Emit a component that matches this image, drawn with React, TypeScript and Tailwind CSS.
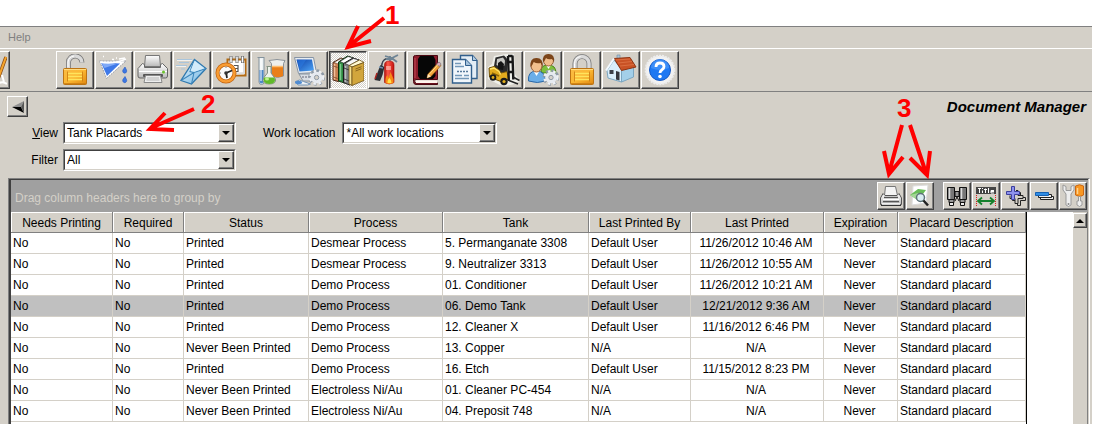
import type { ReactNode } from "react";

type IconProps = { children: ReactNode };

const Icon = ({ children }: IconProps) => (
    <svg viewBox="0 0 32 32" className="h-8 w-8 shrink-0" fill="none" aria-hidden="true">
        {children}
    </svg>
);

const Gear = ({ x, y }: { x: number; y: number }) => (
    <g>
        <circle cx={x} cy={y} r="6.6" stroke="#8d99a6" strokeWidth="3.4" strokeDasharray="2.6 2.6" />
        <circle cx={x} cy={y} r="6.3" stroke="#eef1f5" strokeWidth="2.6" strokeDasharray="2.4 2.8" />
        <circle cx={x} cy={y} r="4.3" fill="#f4f6f9" stroke="#e6eaf0" strokeWidth="3" />
        <circle cx={x} cy={y} r="2.2" fill="#d4d0c8" stroke="#8d99a6" />
    </g>
);

const LockBody = () => (
    <g>
        <rect x="4.5" y="14.5" width="23" height="16" rx="1" fill="url(#gold)" stroke="#bd7413" />
        <path d="M5 15.5h22" stroke="#ffdc82" />
        <path d="M9 19.5h14M9 22.5h14M9 25.5h14" stroke="#ffe45c" strokeWidth="1.4" />
        <path d="M8.5 17.5v10M23.5 17.5v10M5 29.5h22" stroke="#c97b12" strokeWidth=".8" />
    </g>
);

const Defs = () => (
    <svg className="absolute h-0 w-0" aria-hidden="true">
        <defs>
            <linearGradient id="gold" x1="0" y1="0" x2="1" y2="1">
                <stop offset="0" stopColor="#f9bc45" />
                <stop offset=".5" stopColor="#fbb733" />
                <stop offset="1" stopColor="#e0870f" />
            </linearGradient>
            <linearGradient id="sky" x1="0" y1="0" x2="1" y2="1">
                <stop offset="0" stopColor="#eaf6fd" />
                <stop offset="1" stopColor="#6db3e2" />
            </linearGradient>
            <linearGradient id="blue" x1="0" y1="0" x2="1" y2="1">
                <stop offset="0" stopColor="#0b3fa8" />
                <stop offset="1" stopColor="#4fa6f7" />
            </linearGradient>
            <linearGradient id="red" x1="0" y1="0" x2="1" y2="0">
                <stop offset="0" stopColor="#b3100c" />
                <stop offset=".35" stopColor="#ff5a4a" />
                <stop offset="1" stopColor="#c1120e" />
            </linearGradient>
            <linearGradient id="grey" x1="0" y1="0" x2="0" y2="1">
                <stop offset="0" stopColor="#ffffff" />
                <stop offset="1" stopColor="#b9b9b9" />
            </linearGradient>
        </defs>
    </svg>
);

const UnlockIcon = () => (
    <Icon>
        <path d="M9.5 14V8a6.7 6.3 0 0 1 13.4 0.5" stroke="#777" strokeWidth="5" />
        <path d="M9.5 14V8a6.7 6.3 0 0 1 13.4 0.5" stroke="#d9d9d9" strokeWidth="3.4" />
        <path d="M9 13V8a7 7 0 0 1 6-6" stroke="#fff" />
        <LockBody />
    </Icon>
);

const LockIcon = () => (
    <Icon>
        <path d="M9 15V9.500a7 7 0 0 1 14 0V15" stroke="#7d7d7d" strokeWidth="5" />
        <path d="M9 15V9.500a7 7 0 0 1 14 0V15" stroke="#d9d9d9" strokeWidth="3.400" />
        <path d="M8.500 15V9.500a7.500 7.500 0 0 1 6-7" stroke="#fff" />
        <LockBody />
    </Icon>
);

const FunnelIcon = () => (
    <Icon>
        <path d="M1.500 7h26.500L8.500 24.500Z" fill="#fff" stroke="#9a9ea8" strokeDasharray="2 1" />
        <path d="M3 8.500l19 1L9 22Z" fill="#3f79e8" />
        <path d="M3.500 9l15 1-12 4Z" fill="#7fa9f7" />
        <path d="M2 8q12 3 26-3" stroke="#fff" strokeWidth="1.500" />
        <path d="M21 5l6-1M5 2.500h1M18 4h1M14 5.500h2" stroke="#fff" strokeWidth="1.400" />
        <path d="M27 13l1.500 3a2 2.200 0 1 1-3.600 0ZM27 22.500l1.500 3a2 2.200 0 1 1-3.600 0Z" fill="#3d78e3" stroke="#2758bd" strokeWidth=".6" />
    </Icon>
);

const PrinterIcon = () => (
    <Icon>
        <path d="M8.500 1.500h14l1 11h-16Z" fill="url(#grey)" stroke="#777" />
        <path d="M5.500 9.500l2 1v3h16v-3l2-1 5 5v7.500q0 2-2 2H3q-2 0-2-2V14.500Z" fill="url(#grey)" stroke="#666" />
        <path d="M2 17.500h28" stroke="#fff" />
        <rect x="6" y="20" width="20" height="3" rx="1" fill="#555" />
        <path d="M8.500 21.500h15l1.500 7H7Z" fill="#eee" stroke="#888" />
        <path d="M10 24h12M9.500 26h13" stroke="#b5b5b5" />
        <circle cx="26.500" cy="18" r="1.500" fill="#6ac22c" />
    </Icon>
);

const MailIcon = () => (
    <Icon>
        <path d="M1 5.500h15M3 8.500h10M0 11.500h11M5 15h4" stroke="#a9c5dc" />
        <path d="M1 6.500h15M0 12.500h10" stroke="#fff" strokeWidth=".7" />
        <path d="M18.500 5.500L30 14.500 15.500 30 5 26.500Z" fill="url(#sky)" stroke="#2f78ae" strokeWidth="1.300" />
        <path d="M5 26.500L18 18.500 30 14.500M18 18.500L15.500 30M18.500 5.500L14 17.500l4 1" stroke="#3c86bb" strokeWidth="1.100" />
        <path d="M18.500 7l-4 10 4 .7 10-3.400Z" fill="#d2ebfa" />
    </Icon>
);

const ScheduleIcon = () => (
    <Icon>
        <rect x="12.500" y="5.500" width="18" height="16" fill="#fff" stroke="#b26a12" strokeWidth="2" />
        <path d="M14 20l15-1V9" stroke="#ddd" strokeWidth="2" />
        <path d="M16 2v7M22 2v7M27.500 2v7" stroke="#666" strokeWidth="3" />
        <path d="M16 2.500v6M22 2.500v6M27.500 2.500v6" stroke="#fff" strokeWidth="1.500" />
        <path d="M19 11.500h4v6h-4M20 14.500h3" stroke="#555" strokeWidth="1.200" />
        <circle cx="11" cy="19" r="8.500" fill="#fafafa" stroke="#c06513" strokeWidth="4" />
        <circle cx="11" cy="19" r="8.500" stroke="#f99c32" strokeWidth="2.500" />
        <path d="M11 19l6-2.500M11 18l1 6" stroke="#222" strokeWidth="1.800" />
        <circle cx="11" cy="19" r="1.800" fill="#333" />
        <path d="M11 12.500v1.500M4.500 19H6" stroke="#888" />
    </Icon>
);

const ChemistryIcon = () => (
    <Icon>
        <path d="M3.500 3.500h7M5 4v24q0 2.500 2.500 2.500T10 28V4" fill="#eef3f5" stroke="#85939c" />
        <path d="M5.500 16h4v12q-2 3-4 0Z" fill="#4b86c7" />
        <path d="M7 5v22" stroke="#fff" />
        <path d="M15 6.500q8-2 16 0l-1.500 3V22q-6 3-12 0V9.500Z" fill="#eef0ee" stroke="#8b9298" />
        <path d="M18 12.500h11V22q-5 2.500-11 0Z" fill="#e97f19" />
        <path d="M18 12.500h11" stroke="#ffbe70" strokeWidth="1.500" />
        <path d="M12.500 12.500h5M13.500 13v6l-4 5q-2 6 5.500 6t6.500-5l-4.500-6v-6" fill="#edf2ec" stroke="#859385" />
        <path d="M10 23.500h10.500q2.500 6.500-5 6.500t-5.500-6.500" fill="#61b929" />
        <ellipse cx="13" cy="25" rx="2" ry="1.500" fill="#bdf38a" />
    </Icon>
);

const ComputerIcon = () => (
    <Icon>
        <path d="M6 20h17l4 7H10Z" fill="#d9dee4" stroke="#8a949e" />
        <path d="M1.500 3.500h19l3 15-18 1Z" fill="#e8edf2" stroke="#8794a4" />
        <path d="M3.500 5.500h15.500l2 11-14.500 1Z" fill="url(#blue)" />
        <path d="M4 6h9l-6 9Z" fill="#2c79df" opacity=".6" />
        <path d="M9 23h13" stroke="#667" strokeDasharray="2 1" />
        <path d="M2.500 27.500q4-3 8 0l7 2.500-3 1H5Z" fill="#ecf1f5" stroke="#7495b7" />
        <ellipse cx="5.500" cy="28.500" rx="3.500" ry="1.700" fill="#4f8bd1" />
        <Gear x={23.600} y={23.500} />
    </Icon>
);

const BooksIcon = () => (
    <Icon>
        <path d="M1 8.500L9 4l4 1.500V24l-7 3.500L1 26Z" fill="#c98052" stroke="#4b2514" />
        <path d="M2 8.500l7-4 4 1-6.500 4.500Z" fill="#fff" stroke="#6b4630" strokeWidth=".6" />
        <path d="M2.500 10v15.500" stroke="#f3c19c" strokeWidth="1.500" />
        <path d="M1.500 12l4 1.500M1.500 23l4 1.500" stroke="#7c4222" strokeWidth=".8" />
        <path d="M6.500 8L15.500 2l6 2v21l-9 4-6-2Z" fill="#2f8a43" stroke="#10310f" />
        <path d="M8 7.500l8-5 5.500 1.500-9 5.500Z" fill="#fff" stroke="#222" strokeWidth=".6" />
        <path d="M8.500 10v16" stroke="#7cc98b" strokeWidth="1.500" />
        <path d="M11.500 9.500L21 4l6 2v21l-9.500 4-6-2.500Z" fill="#7d8083" stroke="#1b1b1b" />
        <path d="M13 9.500l8.500-5L27 6l-9.500 5.500Z" fill="#f6f6f6" stroke="#222" strokeWidth=".6" />
        <path d="M13.500 12v16" stroke="#b9bcbf" strokeWidth="1.500" />
        <path d="M12 14l5 2M12 25l5 2" stroke="#2a2a2a" strokeWidth=".8" />
        <path d="M17 11.500L27.500 6l4.500 2.500-12 4.500Z" fill="#fff8cf" stroke="#6f5216" strokeWidth=".8" />
        <path d="M17 11.500l3 1.500v18.500l-3-1.500Z" fill="#f5df8c" stroke="#6f5216" strokeWidth=".8" />
        <path d="M20 13l12-4.500v18L20 31.500Z" fill="#d2a63c" stroke="#6f5216" strokeWidth=".8" />
        <path d="M23.500 15l6-2.300M23.500 17l6-2.300" stroke="#8a651c" />
    </Icon>
);

const ExtinguisherIcon = () => (
    <Icon>
        <path d="M18 5Q12 4 11 10l-1 5" stroke="#3a4350" strokeWidth="1.500" />
        <path d="M9.500 11l4 2-2 8-2.500 6-5.500-1Z" fill="#2c2f35" />
        <path d="M6 19l-2 6" stroke="#a82620" strokeWidth="1.500" />
        <path d="M8 13l4 1" stroke="#6e90af" strokeWidth="1.500" />
        <path d="M14 2l7 2 6-3M15 5h7l4 3M19 2v5" stroke="#6e8494" strokeWidth="1.800" />
        <path d="M13.500 11q0-4 4.800-4t4.700 4v17.500q-4.700 3-9.500 0Z" fill="url(#red)" stroke="#a90d0a" strokeWidth=".6" />
        <rect x="15" y="12" width="5" height="4" fill="#ffd8d0" opacity=".55" />
        <path d="M14.500 29q-.5-6 2-8l1 3 2-6 3 7v4q-4 2-8 0" fill="#f78918" />
        <path d="M16.500 29q0-4 2-5 2 2 2 5" fill="#ffe04a" />
    </Icon>
);

const LogbookIcon = () => (
    <Icon>
        <path d="M3.500 3q0-1.500 2-1.500h22v24h-22q-2 1.500 0 3.500h22v1.500H6q-2.500 0-2.500-3Z" fill="#8e1d2c" stroke="#4b0912" />
        <path d="M6 26.500h21v2.500H6Z" fill="#fff3ec" />
        <path d="M10 2h13.500l2 4v16l-2.500 3H10l-2-3V5Z" fill="#060606" />
        <path d="M5 4v20" stroke="#c14b57" />
        <path d="M17 24l1-4L28 9l3 2.500-10 11Z" fill="#f2a53c" stroke="#a45d14" strokeWidth=".7" />
        <path d="M17 24l1-4 3 2.500Z" fill="#ffe7bd" />
        <path d="M26.500 10.500l1.500-2q2-1 3 1.500l-1.500 2.500Z" fill="#d9a4bd" stroke="#777" strokeWidth=".7" />
        <path d="M19 20.500l9-10" stroke="#ffe08d" />
    </Icon>
);

const DocumentsIcon = () => (
    <Icon>
        <path d="M11.500 1.500h12l4.500 5v18H11.500Z" fill="#e3edf5" stroke="#315f8c" strokeWidth="1.400" />
        <path d="M23.500 1.500v5H28" fill="#b2cbe0" stroke="#315f8c" />
        <path d="M3.500 5.500h13l6 6V29h-19Z" fill="#f0f6fb" stroke="#315f8c" strokeWidth="1.400" />
        <path d="M16.500 5.500v6h6" fill="#a5c2db" stroke="#315f8c" />
        <path d="M6 9.500h6M6 12.500h9M6 21.500h7M6 24.500h14M15 21.500h5" stroke="#7398b8" strokeWidth="1.500" />
        <path d="M8 17.500h12" stroke="#56799b" strokeWidth="1.500" strokeDasharray="2 1" />
    </Icon>
);

const ForkliftIcon = () => (
    <Icon>
        <path d="M0 13L4 10 6 2l12-2h8l1 20 5 7-6 3-8 2-6-1L0 25Z" fill="#efefe9" />
        <path d="M6 12L7.500 3.500 16 1.500l3 3V18l-6 1-6-4Z" fill="#2a2a2a" />
        <path d="M9 5l6-1.500 2 3-.5 5-4 1.500-4-2Z" fill="#c9c9c4" />
        <path d="M10 9l3-2 3 3-1 6-5-1Z" fill="#151515" />
        <path d="M1 14l5-1.500 5 3.500 2 3 6-1.500 1.500 7.500-6.500 3L1.500 23Z" fill="#e3ab1e" stroke="#6e4f08" />
        <path d="M2 15l4-1 5 3.500 1.500 3" stroke="#ffe56d" strokeWidth="1.300" />
        <path d="M4 19l7 3" stroke="#8d6408" strokeWidth="1.500" />
        <path d="M20 2l.8 25M24.500 1.500l.8 24M20 2h4.500M20 8h5M20.500 18h5" stroke="#171717" strokeWidth="2.400" />
        <path d="M21 26.500l9 3.500M25 23l6.500 3.500" stroke="#222" strokeWidth="1.500" />
        <circle cx="5" cy="23.500" r="3.300" fill="#1b1b1b" />
        <circle cx="5" cy="23.500" r="1.400" fill="#e0ad1c" />
        <circle cx="16" cy="27.500" r="3.700" fill="#1b1b1b" />
        <circle cx="16" cy="27.500" r="1.600" fill="#e0ad1c" />
    </Icon>
);

const UsersIcon = () => (
    <Icon>
        <path d="M14 17q0-6 7-6 8 0 8 8H15Z" fill="#7fbf3d" stroke="#4b8419" />
        <path d="M19 11l2.500 4 2.500-4" fill="#fff" />
        <ellipse cx="21.500" cy="6.500" rx="5" ry="5.500" fill="#f0bd8a" stroke="#9b623a" />
        <path d="M16 8q-1-8 5.500-8T27 8l-2-3q-4 1-6-1-1 3-3 4" fill="#7c4519" />
        <path d="M1.500 27q-1-10 8-10t9 10q-8 3-17 0" fill="#6baee8" stroke="#2d69a7" />
        <path d="M6.500 17l3 5 3-5" fill="#fff" />
        <ellipse cx="9.500" cy="11.500" rx="5.500" ry="6.500" fill="#f2c08d" stroke="#9b623a" />
        <path d="M3.500 13q-1-9 6-9t6.200 9l-2-4q-4 1-7-1-1 3-3.200 5" fill="#7c4519" />
        <Gear x={24} y={23.500} />
    </Icon>
);

const HomeIcon = () => (
    <Icon>
        <path d="M12 1h3v6h-3Z" fill="#a8c6dc" stroke="#7893a8" strokeWidth=".7" />
        <path d="M2 16.500L9 6l7.500 9V28L3 24Z" fill="#d9eefb" stroke="#7ba6c1" />
        <path d="M16.500 15L28.500 12v11L16.500 28Z" fill="#a3cfe9" stroke="#7ba6c1" />
        <path d="M9 4.500l16-1L31 13l-14.500 3.500Z" fill="#c95225" stroke="#8d3412" />
        <path d="M11 6l14-1M13 9l14-1.500M15 12l14-1.500" stroke="#db6f41" />
        <path d="M9 4.500L1 16.500" stroke="#f3faff" strokeWidth="2" />
        <rect x="4.500" y="16" width="4" height="4" fill="#3a3f49" />
        <path d="M11 17l3.500 1v8.500l-3.500-1Z" fill="#33353d" />
    </Icon>
);

const HelpIcon = () => (
    <Icon>
        <circle cx="16" cy="16" r="14.300" fill="#f2f2f2" stroke="#ececec" strokeWidth="2" strokeDasharray="2 1" />
        <circle cx="16" cy="16" r="10.500" fill="#1e78f2" stroke="#1659c4" />
        <path d="M7 14a9 9 0 0 1 18 0q-9 4-18 0" fill="#58a4ff" opacity=".5" />
        <path d="M12 13q0-4 4-4t4 3.500q0 2-2 3.200t-2 3.300" stroke="#fff" strokeWidth="2.800" />
        <circle cx="16" cy="22.500" r="1.800" fill="#fff" />
    </Icon>
);

const tools = [
    { label: "Unlock", icon: <UnlockIcon /> },
    { label: "Solutions", icon: <FunnelIcon /> },
    { label: "Print", icon: <PrinterIcon /> },
    { label: "Mail", icon: <MailIcon /> },
    { label: "Schedule", icon: <ScheduleIcon /> },
    { label: "Chemistry", icon: <ChemistryIcon /> },
    { label: "System", icon: <ComputerIcon /> },
    { label: "Documents", icon: <BooksIcon />, active: true },
    { label: "Safety", icon: <ExtinguisherIcon /> },
    { label: "Logbook", icon: <LogbookIcon /> },
    { label: "Reports", icon: <DocumentsIcon /> },
    { label: "Inventory", icon: <ForkliftIcon /> },
    { label: "Users", icon: <UsersIcon /> },
    { label: "Lock", icon: <LockIcon /> },
    { label: "Home", icon: <HomeIcon /> },
    { label: "Help", icon: <HelpIcon /> },
];

const GridPrintIcon = () => (
    <svg viewBox="0 0 24 24" className="h-6 w-6" fill="none" aria-hidden="true">
        <path d="M6.500 2.500h10l2 9h-13Z" fill="#f4f4f4" stroke="#777" />
        <path d="M4 9.500L1.500 14v6.500h21V14L20 9.500l-2 2H6Z" fill="url(#grey)" stroke="#555" />
        <path d="M5 13.500h14M4 17.500h16" stroke="#555" strokeWidth="1.500" />
        <path d="M4 15.500h16M3 20h18" stroke="#fff" strokeWidth="1.500" />
        <path d="M2 21.500h20" stroke="#333" />
    </svg>
);

const PreviewIcon = () => (
    <svg viewBox="0 0 24 24" className="h-6 w-6" fill="none" aria-hidden="true">
        <path d="M5 2l15-1-2 18-14 2Z" fill="#fff" stroke="#ddd" />
        <path d="M2 11l8-6 8 1-6 8 6 4-7-1Z" fill="#68bd59" />
        <path d="M2 11l8-2 4 5-3 3Z" fill="#a3d796" />
        <circle cx="12.500" cy="13.500" r="4" fill="#d9eef2" stroke="#5d7178" strokeWidth="1.500" />
        <path d="M15.500 16.500l4.500 5" stroke="#222" strokeWidth="2.500" />
    </svg>
);

const FindIcon = () => (
    <svg viewBox="0 0 24 24" className="h-6 w-6" fill="none" aria-hidden="true">
        <path d="M2.500 3.500h7v12h-7ZM14.500 3.500h7v12h-7Z" fill="#777" stroke="#111" />
        <path d="M4.500 4v11M16.500 4v11" stroke="#ddd" strokeWidth="1.500" />
        <path d="M10 7.500h4v5h-4ZM4 15.500h5v3H4ZM15 15.500h5v3h-5Z" fill="#999" stroke="#111" />
        <path d="M4.500 19v2.500h4V19M15.500 19v2.500h4V19" fill="#eee" stroke="#111" />
        <path d="M10 17l2-4 2 4" stroke="#111" />
    </svg>
);

const FitColumnsIcon = () => (
    <svg viewBox="0 0 24 24" className="h-6 w-6" fill="none" aria-hidden="true">
        <rect x="2" y="3" width="20" height="7" fill="#444" />
        <path d="M4 4.500h3M5.500 4.500V9M8.500 6.500V9M8.500 4v1M10 5.500h3M11.500 4.500V9M14.500 4v5M20 6.500h-3V9h3M17 7.500h3" stroke="#fff" />
        <path d="M2.500 11v11M21.500 11v11" stroke="#e02020" strokeDasharray="1 1" />
        <path d="M4 17h16M8 13.500L4 17l4 3.500M16 13.500l4 3.500-4 3.500" stroke="#15802c" strokeWidth="1.800" />
    </svg>
);

const ExpandIcon = () => (
    <svg viewBox="0 0 24 24" className="h-6 w-6" fill="none" aria-hidden="true">
        <path d="M15.500 8.500h2v5h5v3h-5v5h-3v-5h-5v-3" fill="#d4d0c8" stroke="#222" />
        <path d="M13 6.500h2v5h5v3h-5v5h-3v-5H7v-3" fill="#d4d0c8" stroke="#222" />
        <path d="M8.500 2.500h3v5h5v3h-5v5h-3v-5h-5v-3h5Z" fill="#8d92ed" stroke="#3c3f9e" />
    </svg>
);

const CollapseIcon = () => (
    <svg viewBox="0 0 24 24" className="h-6 w-6" fill="none" aria-hidden="true">
        <path d="M8.500 12.500h13v3h-13Z" fill="#eee" stroke="#222" />
        <path d="M6.500 10.500h13v3h-13Z" fill="#eee" stroke="#222" />
        <path d="M3.500 8.500h13v3h-13Z" fill="#2f8de5" stroke="#1561b4" />
    </svg>
);

const SettingsIcon = () => (
    <svg viewBox="0 0 24 24" className="h-6 w-6" fill="none" aria-hidden="true">
        <path d="M2 1v5l3 4v11q2.500 3 5 0V10l3-4V1l-3 1.500v4H5v-4Z" fill="#eee" stroke="#999" />
        <circle cx="7.500" cy="20" r="1" fill="#888" />
        <path d="M14.500 2q4-2.500 8 0v9q-3.500 3-8 0Z" fill="#f89722" stroke="#cb6813" />
        <path d="M16.500 4v6" stroke="#ffd38d" strokeWidth="1.500" />
        <path d="M17.500 12.500h2V17h1.500v4q-2.500 3-5 0v-4h1.500Z" fill="#eee" stroke="#999" />
    </svg>
);

const gridTools = [
    [
        { label: "Print placards", icon: <GridPrintIcon /> },
        { label: "Preview placards", icon: <PreviewIcon /> },
    ],
    [
        { label: "Find", icon: <FindIcon /> },
        { label: "Fit columns", icon: <FitColumnsIcon /> },
        { label: "Expand all", icon: <ExpandIcon /> },
        { label: "Collapse all", icon: <CollapseIcon /> },
        { label: "Settings", icon: <SettingsIcon /> },
    ],
];

const columns = [
    { title: "Needs Printing", width: "w-[102px]" },
    { title: "Required", width: "w-[71px]" },
    { title: "Status", width: "w-[125px]" },
    { title: "Process", width: "w-[134px]" },
    { title: "Tank", width: "w-[146px]" },
    { title: "Last Printed By", width: "w-[102px]" },
    { title: "Last Printed", width: "w-[133px]", center: true },
    { title: "Expiration", width: "w-[74px]", center: true },
    { title: "Placard Description", width: "w-[128px]" },
];

const rows = [
    ["Printed", "Desmear Process", "5. Permanganate 3308", "Default User", "11/26/2012 10:46 AM"],
    ["Printed", "Desmear Process", "9. Neutralizer 3313", "Default User", "11/26/2012 10:55 AM"],
    ["Printed", "Demo Process", "01. Conditioner", "Default User", "11/26/2012 10:21 AM"],
    ["Printed", "Demo Process", "06. Demo Tank", "Default User", "12/21/2012 9:36 AM"],
    ["Printed", "Demo Process", "12. Cleaner X", "Default User", "11/16/2012 6:46 PM"],
    ["Never Been Printed", "Demo Process", "13. Copper", "N/A", "N/A"],
    ["Printed", "Demo Process", "16. Etch", "Default User", "11/15/2012 8:23 PM"],
    ["Never Been Printed", "Electroless Ni/Au", "01. Cleaner PC-454", "N/A", "N/A"],
    ["Never Been Printed", "Electroless Ni/Au", "04. Preposit 748", "N/A", "N/A"],
].map((r) => ["No", "No", ...r, "Never", "Standard placard"]);

const selectedRow = 3;

const raised =
    "flex shrink-0 items-center justify-center overflow-hidden border border-t-white border-l-white border-r-[#404040] border-b-[#404040] bg-[#d4d0c8] shadow-[inset_-1px_-1px_0_#808080]";

const pressed =
    "flex shrink-0 items-center justify-center overflow-hidden border border-t-[#404040] border-l-[#404040] border-r-white border-b-white bg-[repeating-conic-gradient(#ffffff_0_25%,#d4d0c8_0_50%)] bg-[length:2px_2px] shadow-[inset_1px_1px_0_#808080]";

type ComboProps = { id: string; value: string; width: string };

const Combo = ({ id, value, width }: ComboProps) => (
    <div className={`relative h-[22px] border border-t-[#808080] border-l-[#808080] border-r-white border-b-white ${width}`}>
        <select
            id={id}
            className="block h-full w-full appearance-none border border-t-[#404040] border-l-[#404040] border-r-[#d4d0c8] border-b-[#d4d0c8] bg-white pl-0.5 text-xs text-black outline-none"
        >
            <option>{value}</option>
        </select>
        <span className={`pointer-events-none absolute top-px right-px bottom-px w-4 ${raised}`}>
            <svg viewBox="0 0 8 4" className="h-1 w-2" aria-hidden="true">
                <path d="M0 0h8L4 4Z" fill="#000" />
            </svg>
        </span>
    </div>
);

const Callouts = () => (
    <>
        <svg
            viewBox="0 0 424 160"
            className="pointer-events-none absolute top-0 left-0 h-[160px] w-[424px]"
            fill="none"
            stroke="#ff0000"
            strokeWidth="4"
        >
            <path d="M384 18L349 46M358 26L348 47L371 41" />
            <path d="M194 109L151 128M165 113L150 129L174 130" />
            <text x="385" y="24" className="fill-[#ff0000] stroke-none text-[26px] font-bold">
                1
            </text>
            <text x="201" y="113" className="fill-[#ff0000] stroke-none text-[26px] font-bold">
                2
            </text>
        </svg>
        <svg
            viewBox="0 0 80 100"
            className="pointer-events-none absolute top-[90px] right-[145px] h-[100px] w-20"
            fill="none"
            stroke="#ff0000"
            strokeWidth="4"
        >
            <path d="M32 35L19 83M14 61L19 84L33 67" />
            <path d="M40 35L56 83M40 68L57 85L60 61" />
            <text x="27" y="27" className="fill-[#ff0000] stroke-none text-[26px] font-bold">
                3
            </text>
        </svg>
    </>
);

const App = () => {
    return (
        <div className="relative flex h-screen flex-col overflow-hidden bg-white pt-[26px] pr-[3px] font-['Liberation_Sans',Arial,sans-serif] text-xs text-black">
            <Defs />
            <div className="flex min-h-0 flex-1 flex-col border-t border-[#808080] bg-[#d4d0c8]">
                <nav className="flex h-[21px] shrink-0 items-center pl-2">
                    <button className="text-[11px] text-[#808080]">Help</button>
                </nav>

                {/* Main toolbar */}
                <div className="flex h-11 shrink-0 items-center gap-px overflow-hidden border-t border-t-white border-b border-b-[#808080]">
                    <button aria-label="Lab" className={`-ml-7 mr-[45px] h-[38px] w-[38px] ${raised}`}>
                        <Icon>
                            <path d="M23 25L31 3" stroke="#8a4a12" strokeWidth="3.500" />
                            <path d="M23 25L31 3" stroke="#f5a52c" strokeWidth="2" />
                            <path d="M27 21l2 7M24 29q4-2 8 1" stroke="#fff" strokeWidth="2" />
                        </Icon>
                    </button>
                    {tools.map((tool) => (
                        <button
                            key={tool.label}
                            aria-label={tool.label}
                            className={`h-[38px] w-[38px] ${tool.active ? pressed : raised}`}
                        >
                            {tool.icon}
                        </button>
                    ))}
                </div>

                <header className="flex shrink-0 items-center justify-between pt-1 pr-1.5 pl-[7px]">
                    <button aria-label="Back" className={`h-[21px] w-[21px] ${raised}`}>
                        <svg viewBox="0 0 12 12" className="h-3 w-3 shrink-0" aria-hidden="true">
                            <path d="M0 6L12 0L9 6Z" fill="#909090" />
                            <path d="M0 6H9L12 12Z" fill="#000" />
                            <path d="M9 6L12 0V12Z" fill="#555" />
                        </svg>
                    </button>
                    <h1 className="text-[15px] leading-4 font-bold italic">Document Manager</h1>
                </header>

                {/* Filters */}
                <form className="flex shrink-0 flex-col gap-[5px] pt-[5px] pb-[7px]">
                    <div className="flex items-center gap-[5px]">
                        <label htmlFor="view" className="w-[58px] text-right">
                            <u>V</u>iew
                        </label>
                        <Combo id="view" value="Tank Placards" width="w-[173px]" />
                        <label htmlFor="location" className="mr-0.5 ml-[22px]">
                            Work location
                        </label>
                        <Combo id="location" value="*All work locations" width="w-[155px]" />
                    </div>
                    <div className="flex items-center gap-[5px]">
                        <label htmlFor="filter" className="w-[58px] text-right">
                            Filter
                        </label>
                        <Combo id="filter" value="All" width="w-[173px]" />
                    </div>
                </form>

                {/* Placard grid */}
                <div className="mr-0.5 ml-2 flex min-h-0 flex-1 border-t border-r border-l border-t-[#808080] border-r-white border-l-[#808080] pr-px">
                    <div className="flex min-w-0 flex-1 flex-col border-t border-l-2 border-[#404040]">
                        <div className="flex h-8 shrink-0 items-center justify-between bg-[#a0a0a0] pr-px pl-1">
                            <span className="pt-1 text-[#d4d0c8]">Drag column headers here to group by</span>
                            <div className="flex gap-[9px]">
                                {gridTools.map((group) => (
                                    <div key={group[0].label} className="flex gap-px">
                                        {group.map((tool) => (
                                            <button key={tool.label} aria-label={tool.label} className={`h-7 w-7 ${raised}`}>
                                                {tool.icon}
                                            </button>
                                        ))}
                                    </div>
                                ))}
                            </div>
                        </div>

                        <div className="flex min-h-0 flex-1 bg-white">
                            <div className="shrink-0 self-stretch overflow-hidden border-r border-black">
                                <table className="w-[1015px] table-fixed border-separate border-spacing-0">
                                    <thead>
                                        <tr>
                                            {columns.map((col) => (
                                                <th
                                                    key={col.title}
                                                    className={`h-[21px] border-r border-b border-[#808080] bg-[#d4d0c8] px-0 pt-0.5 pb-0 text-center font-normal whitespace-nowrap shadow-[inset_1px_1px_0_#ffffff] ${col.width}`}
                                                >
                                                    {col.title}
                                                </th>
                                            ))}
                                        </tr>
                                    </thead>
                                    <tbody>
                                        {rows.map((row, i) => (
                                            <tr key={i} className={i === selectedRow ? "bg-[#c0c0c0]" : "bg-white"}>
                                                {row.map((cell, j) => (
                                                    <td
                                                        key={columns[j].title}
                                                        className={`h-[21px] border-r border-b border-[#d4d0c8] py-0 whitespace-nowrap ${columns[j].center ? "pr-0.5 pl-0 text-center" : "pr-0 pl-0.5 text-left"}`}
                                                    >
                                                        {cell}
                                                    </td>
                                                ))}
                                            </tr>
                                        ))}
                                    </tbody>
                                </table>
                            </div>
                            <div className="flex-1" />
                            <div className="w-[15px] shrink-0 border-r border-[#808080] bg-[#d4d0c8] pt-px">
                                <button aria-label="Scroll up" className={`h-[15px] w-[14px] ${raised}`}>
                                    <svg viewBox="0 0 8 4" className="h-1 w-2" aria-hidden="true">
                                        <path d="M0 4h8L4 0Z" fill="#000" />
                                    </svg>
                                </button>
                            </div>
                        </div>
                    </div>
                </div>
            </div>
            <Callouts />
        </div>
    );
};

export default App;
